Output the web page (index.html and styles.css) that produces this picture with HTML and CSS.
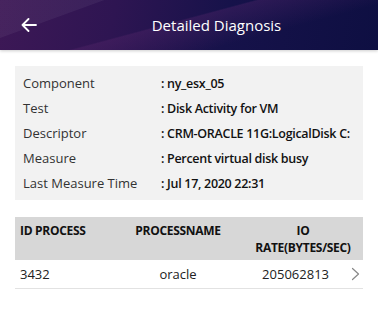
FILE: index.html
```html
<!DOCTYPE html>
<html lang="en">
<head>
    <meta charset="UTF-8">
    <meta name="viewport" content="width=device-width, initial-scale=1.0">
    <title>Detailed Diagnosis</title>
    <link rel="stylesheet" href="styles.css">
</head>
<body>
    <div class="header">
        <button class="back-btn" aria-label="Back">
            <svg width="16" height="14" viewBox="0 0 16 14">
                <path d="M15 7H1.5M7.5 1L1.5 7l6 6" fill="none" stroke="#fff" stroke-width="1.8" stroke-linecap="round" stroke-linejoin="round"/>
            </svg>
        </button>
        <div class="header-title">Detailed Diagnosis</div>
    </div>

    <div class="content">
        <div class="info-card">
            <div class="info-row">
                <span class="info-label">Component</span>
                <span class="info-value">: ny_esx_05</span>
            </div>
            <div class="info-row">
                <span class="info-label">Test</span>
                <span class="info-value">: Disk Activity for VM</span>
            </div>
            <div class="info-row">
                <span class="info-label">Descriptor</span>
                <span class="info-value">: CRM-ORACLE 11G:LogicalDisk C:</span>
            </div>
            <div class="info-row">
                <span class="info-label">Measure</span>
                <span class="info-value">: Percent virtual disk busy</span>
            </div>
            <div class="info-row">
                <span class="info-label">Last Measure Time</span>
                <span class="info-value">: Jul 17, 2020 22:31</span>
            </div>
        </div>

        <div class="process-table">
            <div class="table-head">
                <div class="col col-id">ID PROCESS</div>
                <div class="col col-name">PROCESSNAME</div>
                <div class="col col-rate">IO<br>RATE(BYTES/SEC)</div>
            </div>
            <div class="table-row">
                <div class="col col-id">3432</div>
                <div class="col col-name">oracle</div>
                <div class="col col-rate-value">
                    <span>205062813</span>
                    <svg class="chevron" width="9" height="14" viewBox="0 0 9 14">
                        <path d="M1.5 1.5L7.5 7l-6 5.5" fill="none" stroke="#888" stroke-width="1.2" stroke-linecap="round" stroke-linejoin="round"/>
                    </svg>
                </div>
            </div>
        </div>
    </div>
</body>
</html>
```

FILE: styles.css
```css
* {
    margin: 0;
    padding: 0;
    box-sizing: border-box;
}

body {
    font-family: 'Open Sans', 'Liberation Sans', sans-serif;
    background-color: #fff;
    color: #222;
}

.header {
    height: 50px;
    display: flex;
    align-items: center;
    background:
        linear-gradient(160deg, rgba(255, 255, 255, 0.05) 0%, rgba(255, 255, 255, 0.05) 20%, transparent 20.5%),
        linear-gradient(165deg, transparent 45%, rgba(90, 40, 110, 0.35) 46%, transparent 70%),
        linear-gradient(100deg, #3d1856 0%, #2e1552 30%, #16124a 60%, #0e0f42 100%);
    box-shadow: 0 1px 3px rgba(0, 0, 0, 0.2);
}

.back-btn {
    width: 55px;
    height: 50px;
    display: flex;
    align-items: center;
    padding-left: 21px;
    background: none;
    border: none;
    cursor: pointer;
}

.header-title {
    flex: 1;
    text-align: center;
    color: #fff;
    font-size: 15px;
}

.content {
    padding: 16px 15px 0;
}

.info-card {
    background-color: #f2f2f2;
    padding: 5px 8px 4px;
}

.info-row {
    display: grid;
    grid-template-columns: 138px 1fr;
    height: 25px;
    line-height: 25px;
    font-size: 13px;
    white-space: nowrap;
}

.info-label {
    color: #333;
}

.info-value {
    color: #111;
    font-size: 12.5px;
    font-weight: 600;
    letter-spacing: -0.3px;
}

.process-table {
    margin-top: 17px;
}

.table-head,
.table-row {
    display: grid;
    grid-template-columns: 105px 116px 1fr;
}

.table-head {
    background-color: #d7d7d7;
    padding: 5px 0 4px;
    font-size: 12px;
    font-weight: 700;
    line-height: 17px;
    letter-spacing: -0.3px;
    color: #111;
}

.table-row {
    height: 29px;
    align-items: center;
    border-bottom: 1px solid #e2e2e2;
    font-size: 13px;
    color: #222;
}

.col {
    padding: 0 5px;
}

.col-name,
.col-rate {
    text-align: center;
}

.col-rate {
    white-space: nowrap;
    padding-left: 12px;
}

.col-rate-value {
    display: flex;
    align-items: center;
    justify-content: flex-end;
    gap: 22px;
    padding-right: 3px;
}
```
